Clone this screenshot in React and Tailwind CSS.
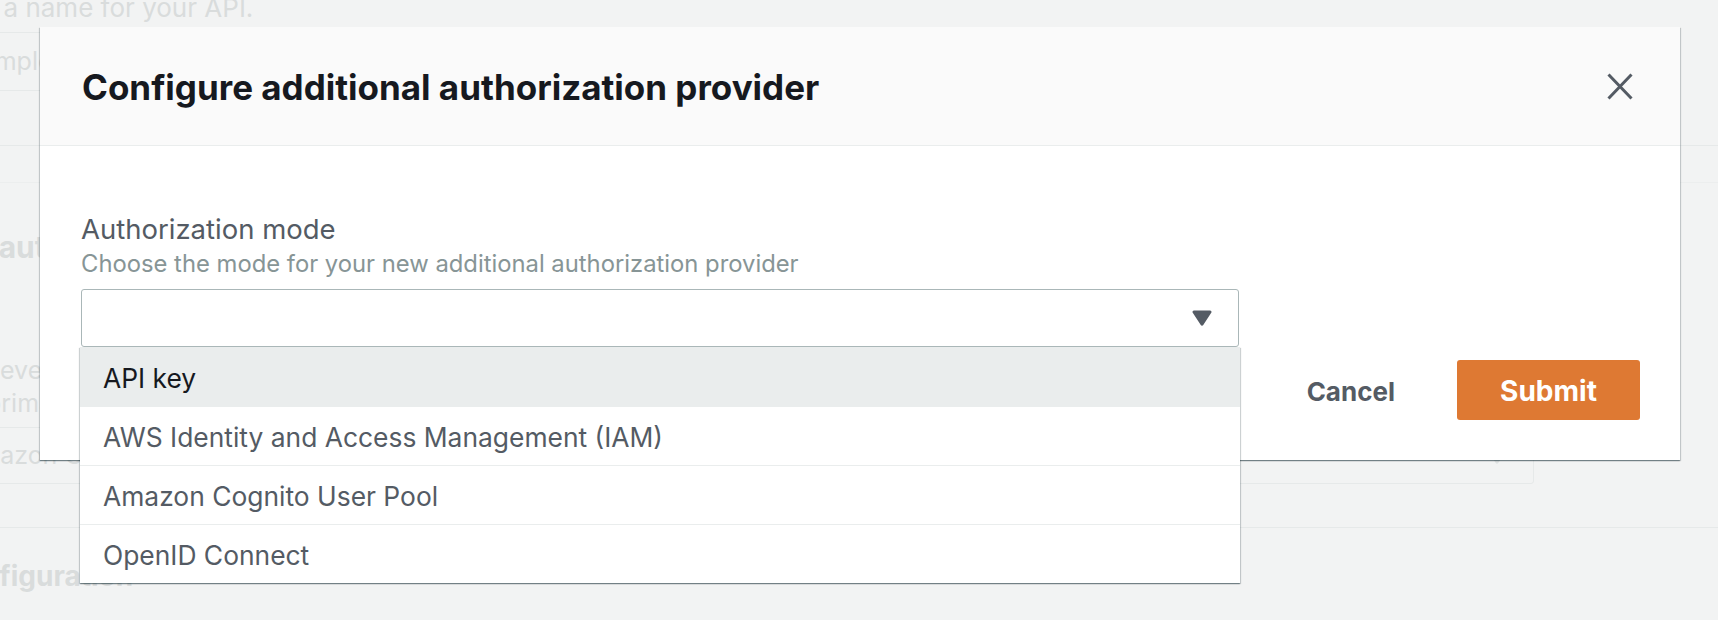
import React from 'react';

const modalShadow =
  'shadow-[0_1px_1px_0_rgba(0,28,36,0.35),1px_1px_1px_0_rgba(0,28,36,0.15),-1px_1px_1px_0_rgba(0,28,36,0.15)]';

const options = [
  'API key',
  'AWS Identity and Access Management (IAM)',
  'Amazon Cognito User Pool',
  'OpenID Connect',
];

const Caret = ({ className }) => (
  <svg viewBox="0 0 20 16" className={className}>
    <path
      d="M2 0.5h16a1.5 1.5 0 0 1 1.25 2.3l-8 12.2a1.5 1.5 0 0 1-2.5 0l-8-12.2A1.5 1.5 0 0 1 2 0.5z"
      fill="currentColor"
    />
  </svg>
);

const CloseIcon = () => (
  <svg viewBox="0 0 26 27" className="h-[27px] w-[26px] text-[#545b64]">
    <path d="M1.5 1.5l23 24M24.5 1.5l-23 24" stroke="currentColor" strokeWidth="3" fill="none" />
  </svg>
);

export default function App() {
  return (
    <div className="relative h-[620px] w-[1718px] overflow-hidden bg-[#f2f3f3] [font-family:Inter,sans-serif]">
      {/* Faded form behind the dialog */}
      <div className="flex flex-col text-[#d9dcdc]">
        <p className="-mt-[5px] -ml-[68px] h-[26px] whitespace-nowrap text-[26px] leading-[26px]">
          Enter a name for your API.
        </p>
        <div className="mt-[11px] -ml-[69px] flex h-[59px] w-[1603px] items-center rounded-[3px] border border-[#e6e9e9] pl-[20px] text-[25px]">
          Example API
        </div>
        <div className="mt-[54px] h-px w-full bg-[#e6e9e9]" />
        <div className="mt-[36px] h-px w-full bg-[#eceeee]" />
        <h3 className="mt-[48px] -ml-[115px] whitespace-nowrap text-[30px] leading-[32px] font-bold">
          Default authorization mode
        </h3>
        <p className="mt-[94px] whitespace-nowrap text-[25px] leading-[26px]">every API needs a default authorization mode</p>
        <p className="mt-[7px] -ml-[14px] whitespace-nowrap text-[25px] leading-[26px]">primary mode used for requests</p>
        <div className="mt-[11px] -ml-[60px] flex h-[57px] w-[1594px] items-center justify-between rounded-[3px] border border-[#e6e9e9] pl-[20px] pr-[26px] text-[25px]">
          <span>Amazon Cognito User Pool</span>
          <Caret className="h-[16px] w-[20px] text-[#dfe2e2]" />
        </div>
        <div className="mt-[43px] h-px w-full bg-[#e6e9e9]" />
        <h3 className="mt-[32px] -ml-[56px] whitespace-nowrap text-[28px] leading-[32px] font-bold">
          Configuration
        </h3>
      </div>

      {/* Dialog */}
      <div className={`absolute top-[27px] left-[40px] flex w-[1640px] flex-col bg-white ${modalShadow}`}>
        <div className="flex h-[119px] items-center justify-between border-b border-[#eaeded] bg-[#fafafa] pl-[42px] pr-[47px]">
          <h2 className="pt-[2px] text-[35px] font-bold text-[#16191f]">Configure additional authorization provider</h2>
          <CloseIcon />
        </div>

        <div className="flex flex-col px-[41px] pt-[68px]">
          <label className="text-[27.5px] leading-[30px] text-[#545b64]">Authorization mode</label>
          <p className="mt-[6px] text-[23.8px] leading-[28px] text-[#879596]">
            Choose the mode for your new additional authorization provider
          </p>
          <div className="relative mt-[11px] w-[1158px]">
            <div className="flex h-[58px] items-center justify-end rounded-[3px] border border-[#aab7b8] bg-white pr-[26px]">
              <Caret className="h-[16px] w-[20px] text-[#545b64]" />
            </div>
            <ul
              className={`absolute top-full -left-px -right-px z-10 flex flex-col bg-white ${modalShadow}`}
            >
              {options.map((opt, i) => (
                <li
                  key={opt}
                  className={`flex h-[59px] items-center pt-[4px] pl-[23px] text-[26.4px] ${
                    i === 0 ? 'bg-[#eaeded] text-[#16191f]' : 'border-t border-[#eaeded] text-[#545b64]'
                  }`}
                >
                  {opt}
                </li>
              ))}
            </ul>
          </div>
        </div>

        <div className="flex items-center justify-end gap-[62px] pt-[13px] pr-[40px] pb-[40px]">
          <button className="pt-[2px] text-[26px] font-bold text-[#545b64]">Cancel</button>
          <button className="h-[60px] w-[183px] rounded-[3px] bg-[#de7933] pt-[2px] text-[28px] font-bold text-white">
            Submit
          </button>
        </div>
      </div>
    </div>
  );
}
